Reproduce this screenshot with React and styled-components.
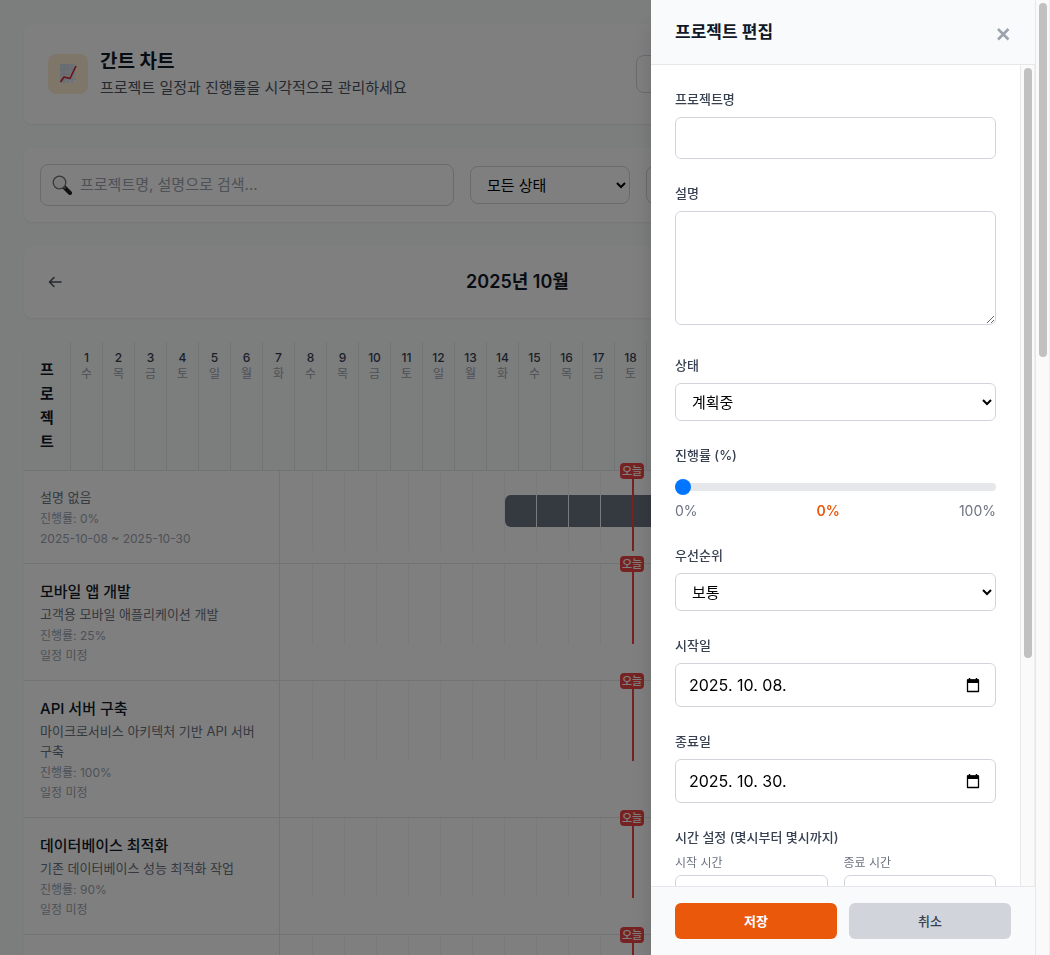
import React, { useState, useRef, useEffect } from 'react';
import styled, { createGlobalStyle, css } from 'styled-components';

const GlobalStyle = createGlobalStyle`
  *, *::before, *::after { box-sizing: border-box; }
  html, body, #root { height: 100%; }
  body {
    margin: 0;
    overflow: hidden;
    font-family: Inter, "Noto Sans CJK KR", sans-serif;
    font-size: 15px;
    line-height: 24px;
    color: #111827;
  }
  h1, h2, h3, p { margin: 0; }
  button, input, select, textarea { font: inherit; color: inherit; }
`;

const ScrollFrame = styled.div`
  display: flex;
  flex: 1;
  min-height: 0;
  height: ${(p) => p.$height || 'auto'};
`;

const Scroller = styled.div`
  flex: 1;
  min-width: 0;
  overflow-x: hidden;
  overflow-y: auto;
  scrollbar-width: none;
`;

const Track = styled.div`
  flex: none;
  width: 15px;
  padding: 3px;
  background: #fafafa;
  border-left: 1px solid #e8e8e8;
  border-right: 1px solid #ededed;
  overflow: hidden;
`;

const Thumb = styled.div`
  width: 8px;
  border-radius: 4px;
  background: #c1c1c1;
`;

const Shell = styled.div`
  position: relative;
  height: 100vh;
  overflow: hidden;
`;

const Page = styled.main`
  display: flex;
  flex-direction: column;
  gap: 24px;
  min-height: 2533px;
  padding: 24px;
  background: #f8fbfa;
`;

const Card = styled.section`
  display: flex;
  align-items: center;
  gap: ${(p) => p.$gap || 16}px;
  padding: ${(p) => p.$pad || 16}px;
  background: #fff;
  border-radius: 8px;
  box-shadow: 0 1px 2px rgba(0, 0, 0, 0.06);
`;

const IconTile = styled.div`
  display: grid;
  place-items: center;
  width: 40px;
  height: 40px;
  border-radius: 8px;
  background: #ffedd5;
`;

const HeaderText = styled.div`
  flex: 1;
`;

const PageTitle = styled.h1`
  font-size: 19px;
  line-height: 28px;
  font-weight: 700;
`;

const Subtitle = styled.p`
  color: #4b5563;
`;

const Outlined = css`
  height: 38px;
  background: #fff;
  border: 1px solid #d1d5db;
  border-radius: 6px;
`;

const Select = styled.select`
  ${Outlined}
  display: block;
  flex: none;
  width: ${(p) => p.$width || '100%'};
  padding: 0 0 0 12px;
  color: #000;
  border-radius: ${(p) => p.$radius || 6}px;
`;

const PlainButton = styled.button`
  ${Outlined}
  flex: none;
  width: ${(p) => p.$width}px;
  border-radius: 8px;
`;

const SearchBox = styled.label`
  display: flex;
  align-items: center;
  gap: 8px;
  flex: 1;
  min-width: 0;
  height: 42px;
  padding: 0 11px;
  border: 1px solid #d1d5db;
  border-radius: 8px;
`;

const SearchInput = styled.input`
  flex: 1;
  min-width: 0;
  padding: 0;
  border: 0;
  outline: 0;
  background: transparent;
  &::placeholder { color: #9ca3af; opacity: 1; }
`;

const MonthButton = styled.button`
  width: 30px;
  height: 40px;
  padding: 0;
  border: 0;
  background: none;
  color: #4b5563;
  display: grid;
  place-items: center;
`;

const MonthTitle = styled.h2`
  flex: 1;
  text-align: center;
  font-size: 18px;
  line-height: 28px;
  font-weight: 600;
`;

const Chart = styled.section`
  background: #fff;
  border-radius: 8px;
  box-shadow: 0 1px 2px rgba(0, 0, 0, 0.06);
  overflow: hidden;
`;

const ChartHead = styled.div`
  display: flex;
  background: #f9fafb;
  border-bottom: 1px solid #e5e7eb;
`;

const HeadLabel = styled.div`
  flex: none;
  width: 47px;
  padding: 16px 15px 16px 16px;
  border-right: 1px solid #e5e7eb;
  font-weight: 600;
  word-break: break-all;
`;

const Day = styled.div`
  flex: none;
  width: 32px;
  padding: 8px 0;
  border-right: 1px solid #e5e7eb;
  text-align: center;
  font-size: 12px;
  line-height: 16px;
  font-weight: 500;
  color: #374151;
`;

const Weekday = styled.div`
  font-weight: 400;
  color: #9ca3af;
`;

const Rows = styled.div`
  position: relative;
`;

const Row = styled.div`
  display: flex;
  border-bottom: 1px solid #e5e7eb;
`;

const Info = styled.div`
  flex: none;
  width: 256px;
  padding: 16px;
  border-right: 1px solid #e5e7eb;
`;

const ProjectName = styled.h3`
  font-size: 15px;
  line-height: 24px;
  font-weight: 500;
`;

const Description = styled.p`
  font-size: 13px;
  line-height: 20px;
  color: #6b7280;
`;

const Meta = styled.p`
  margin-top: 4px;
  font-size: 12px;
  line-height: 16px;
  color: #9ca3af;
`;

const Timeline = styled.div`
  position: relative;
  display: flex;
  height: 80px;
`;

const Cell = styled.div`
  flex: none;
  width: 32px;
  padding: 24px 0;
  border-left: ${(p) => (p.$first ? 0 : 1)}px solid #f3f4f6;
`;

const Segment = styled.div`
  height: 32px;
  background: #6b7280;
  border-radius: ${(p) => (p.$start ? '6px 0 0 6px' : '0')};
`;

const TodayLine = styled.div`
  position: absolute;
  top: 0;
  bottom: 0;
  left: 352px;
  width: 2px;
  background: #ef4444;
`;

const TodayTag = styled.span`
  position: absolute;
  top: -8px;
  left: -12px;
  width: 24px;
  border-radius: 4px;
  background: #ef4444;
  color: #fff;
  text-align: center;
  font-size: 11px;
  line-height: 16px;
  font-weight: 500;
`;

const Overlay = styled.div`
  position: absolute;
  inset: 0 15px 0 0;
  display: flex;
  justify-content: flex-end;
  overflow: hidden;
  background: rgba(0, 0, 0, 0.5);
`;

const Drawer = styled.aside`
  display: flex;
  flex-direction: column;
  width: 384px;
  max-width: 100%;
  height: 100%;
  background: #fff;
  box-shadow: 0 20px 25px -5px rgba(0, 0, 0, 0.2);
`;

const DrawerHead = styled.header`
  display: flex;
  align-items: center;
  justify-content: space-between;
  padding: 16px 24px;
  background: #f9fafb;
  border-bottom: 1px solid #e5e7eb;
`;

const DrawerTitle = styled.h2`
  font-size: 17px;
  line-height: 32px;
  font-weight: 600;
`;

const CloseButton = styled.button`
  display: grid;
  place-items: center;
  width: 16px;
  height: 32px;
  padding: 4px 0 0;
  border: 0;
  background: none;
  color: #9ca3af;
`;

const Fields = styled.form`
  display: flex;
  flex-direction: column;
  gap: 24px;
  min-height: 1131px;
  padding: 24px;
`;

const FieldBox = styled.div`
  display: flex;
  flex-direction: column;
  gap: 8px;
`;

const Label = styled.label`
  font-size: 13px;
  line-height: 20px;
  font-weight: 500;
  color: #374151;
`;

const TextInput = styled.input`
  width: 100%;
  min-width: 0;
  height: 42px;
  padding: 0 12px;
  border: 1px solid #d1d5db;
  border-radius: 6px;
  background: #fff;
`;

const TextArea = styled.textarea`
  display: block;
  width: 100%;
  height: 114px;
  margin-bottom: 6px;
  padding: 8px 12px;
  border: 1px solid #d1d5db;
  border-radius: 6px;
  resize: vertical;
`;

const Range = styled.input`
  appearance: none;
  width: 100%;
  height: 8px;
  margin: 10px 0 2px;
  border-radius: 4px;
  background: #e5e7eb;
  &::-webkit-slider-thumb {
    appearance: none;
    width: 16px;
    height: 16px;
    border-radius: 50%;
    background: #0075ff;
  }
`;

const RangeScale = styled.div`
  display: flex;
  justify-content: space-between;
  font-size: 14px;
  line-height: 20px;
  color: #6b7280;
`;

const RangeValue = styled.output`
  font-weight: 600;
  color: #ea580c;
`;

const DateBox = styled.div`
  display: flex;
  align-items: center;
  height: 44px;
  padding: 0 13px;
  border: 1px solid #d1d5db;
  border-radius: 6px;
`;

const DateInput = styled.input`
  flex: 1;
  min-width: 0;
  padding: 0;
  border: 0;
  outline: 0;
  font-size: 16px;
  color: #000;
`;

const CalendarButton = styled.button`
  display: grid;
  place-items: center;
  width: 18px;
  height: 24px;
  padding: 0;
  border: 0;
  background: none;
  color: #000;
`;

const Columns = styled.div`
  display: grid;
  grid-template-columns: 1fr 1fr;
  gap: 16px;
`;

const TimeField = styled.div`
  display: flex;
  flex-direction: column;
  gap: 4px;
`;

const SmallLabel = styled.label`
  font-size: 12px;
  line-height: 16px;
  color: #6b7280;
`;

const DrawerFoot = styled.footer`
  display: flex;
  gap: 12px;
  padding: 16px 24px;
  background: #f9fafb;
  border-top: 1px solid #e5e7eb;
`;

const ActionButton = styled.button`
  flex: 1;
  height: 36px;
  border: 0;
  border-radius: 6px;
  font-size: 13px;
  line-height: 20px;
  font-weight: ${(p) => (p.$primary ? 600 : 500)};
  color: ${(p) => (p.$primary ? '#fff' : '#374151')};
  background: ${(p) => (p.$primary ? '#ea580c' : '#d1d5db')};
`;

const ChartIcon = () => (
  <svg width="18" height="20" viewBox="0 0 18 20" aria-hidden="true">
    <defs>
      <linearGradient id="paper" x1="0" y1="0" x2="1" y2="1">
        <stop offset="0" stopColor="#cfd9e3" />
        <stop offset="1" stopColor="#eef2f5" />
      </linearGradient>
    </defs>
    <rect x="1" y="0" width="16" height="19" fill="url(#paper)" />
    <path d="M5 0v19M9 0v19M13 0v19M1 5h16M1 10h16M1 15h16" stroke="#c3ced8" strokeWidth="0.6" />
    <path d="M1.500 18 5 13l6 1.500 6-12.500" fill="none" stroke="#d8232f" strokeWidth="1.6" strokeLinejoin="round" />
  </svg>
);

const SearchIcon = () => (
  <svg width="20" height="20" viewBox="0 0 20 20" aria-hidden="true">
    <path d="m12 12 6 6" stroke="#222" strokeWidth="4" strokeLinecap="round" />
    <path d="m11 11 2.500 2.500" stroke="#777" strokeWidth="2" />
    <circle cx="7.500" cy="7.500" r="6.300" fill="#f4f5f6" stroke="#6d7275" strokeWidth="1.300" />
    <path d="M3.500 7a4 4 0 0 1 3.500-3.500" stroke="#fff" strokeWidth="1.200" fill="none" />
  </svg>
);

const ArrowIcon = ({ flip }) => (
  <svg width="14" height="12" viewBox="0 0 14 12" fill="none" stroke="currentColor" strokeWidth="1.600" strokeLinecap="round" strokeLinejoin="round" aria-hidden="true">
    <path d={flip ? 'M1 6h12M8 1.500 12.500 6 8 10.500' : 'M13 6H1.500M6 1.500 1.500 6 6 10.500'} />
  </svg>
);

const CloseIcon = () => (
  <svg width="14" height="14" viewBox="0 0 14 14" stroke="currentColor" strokeWidth="2.600" aria-hidden="true">
    <path d="m2 2 10.500 10.500M12.500 2 2 12.500" />
  </svg>
);

const CalendarIcon = () => (
  <svg width="14" height="15" viewBox="0 0 14 15" aria-hidden="true">
    <path d="M3.500 0v3M10.500 0v3" stroke="currentColor" strokeWidth="1.500" />
    <path d="M1.500 2h11v11.500h-11z" fill="none" stroke="currentColor" strokeWidth="1.300" strokeLinejoin="round" />
    <path d="M1 1.500h12v3.500H1z" fill="currentColor" />
  </svg>
);

const weekdays = ['수', '목', '금', '토', '일', '월', '화'];
const days = Array.from({ length: 31 }, (_, i) => i + 1);

const projects = [
  { name: '', description: '설명 없음', progress: 0, period: '2025-10-08 ~ 2025-10-30', start: 8, end: 30 },
  { name: '모바일 앱 개발', description: '고객용 모바일 애플리케이션 개발', progress: 25 },
  { name: 'API 서버 구축', description: '마이크로서비스 아키텍처 기반 API 서버 구축', progress: 100 },
  { name: '데이터베이스 최적화', description: '기존 데이터베이스 성능 최적화 작업', progress: 90 },
  { name: '', description: '설명 없음', progress: 0 },
];

function ScrollArea({ height, children }) {
  const area = useRef(null);
  const [thumb, setThumb] = useState({ height: 0, top: 0 });
  const measure = () => {
    const { clientHeight, scrollHeight, scrollTop } = area.current;
    const ratio = clientHeight / scrollHeight;
    setThumb({
      height: Math.round(clientHeight * ratio) - 6,
      top: Math.round(scrollTop * ratio),
    });
  };
  useEffect(() => {
    measure();
    const observer = new ResizeObserver(measure);
    observer.observe(area.current);
    return () => observer.disconnect();
  }, []);
  return (
    <ScrollFrame $height={height}>
      <Scroller ref={area} onScroll={measure}>{children}</Scroller>
      <Track aria-hidden="true">
        <Thumb style={{ height: thumb.height, marginTop: thumb.top }} />
      </Track>
    </ScrollFrame>
  );
}

function ProjectRow({ project }) {
  return (
    <Row>
      <Info>
        {project.name && <ProjectName>{project.name}</ProjectName>}
        <Description>{project.description}</Description>
        <Meta>진행률: {project.progress}%</Meta>
        <Meta>{project.period || '일정 미정'}</Meta>
      </Info>
      <Timeline>
        {days.map((d) => (
          <Cell key={d} $first={d === 1}>
            {d >= project.start && d <= project.end && <Segment $start={d === project.start} />}
          </Cell>
        ))}
        <TodayLine>
          <TodayTag>오늘</TodayTag>
        </TodayLine>
      </Timeline>
    </Row>
  );
}

function DateField({ id, label, initial }) {
  const [value, setValue] = useState(initial);
  return (
    <FieldBox>
      <Label htmlFor={id}>{label}</Label>
      <DateBox>
        <DateInput id={id} value={value} onChange={(e) => setValue(e.target.value)} />
        <CalendarButton type="button" aria-label={`${label} 선택`}>
          <CalendarIcon />
        </CalendarButton>
      </DateBox>
    </FieldBox>
  );
}

export default function App() {
  const [progress, setProgress] = useState(0);
  return (
    <Shell>
      <GlobalStyle />
      <ScrollArea height="100%">
        <Page>
          <Card $pad={24} $gap={12}>
            <IconTile><ChartIcon /></IconTile>
            <HeaderText>
              <PageTitle>간트 차트</PageTitle>
              <Subtitle>프로젝트 일정과 진행률을 시각적으로 관리하세요</Subtitle>
            </HeaderText>
            <PlainButton $width={200} aria-label="새로고침" />
            <PlainButton $width={139} aria-label="새 프로젝트" />
          </Card>
          <Card>
            <SearchBox>
              <SearchIcon />
              <SearchInput aria-label="프로젝트 검색" placeholder="프로젝트명, 설명으로 검색..." />
            </SearchBox>
            <Select $width="160px" $radius={8} aria-label="상태 필터">
              <option>모든 상태</option>
            </Select>
            <Select $width="160px" $radius={8} aria-label="우선순위 필터" />
            <PlainButton $width={173} aria-label="초기화" />
          </Card>
          <Card>
            <MonthButton aria-label="이전 달"><ArrowIcon /></MonthButton>
            <MonthTitle>2025년 10월</MonthTitle>
            <MonthButton aria-label="다음 달"><ArrowIcon flip /></MonthButton>
          </Card>
          <Chart>
            <ChartHead>
              <HeadLabel>프로젝트</HeadLabel>
              {days.map((d, i) => (
                <Day key={d}>
                  {d}
                  <Weekday>{weekdays[i % 7]}</Weekday>
                </Day>
              ))}
            </ChartHead>
            <Rows>
              {projects.map((p, i) => <ProjectRow key={i} project={p} />)}
            </Rows>
          </Chart>
        </Page>
      </ScrollArea>
      <Overlay>
        <Drawer role="dialog" aria-labelledby="drawer-title">
          <DrawerHead>
            <DrawerTitle id="drawer-title">프로젝트 편집</DrawerTitle>
            <CloseButton aria-label="닫기"><CloseIcon /></CloseButton>
          </DrawerHead>
          <ScrollArea>
            <Fields id="project-form">
              <FieldBox>
                <Label htmlFor="name">프로젝트명</Label>
                <TextInput id="name" />
              </FieldBox>
              <FieldBox>
                <Label htmlFor="description">설명</Label>
                <TextArea id="description" />
              </FieldBox>
              <FieldBox>
                <Label htmlFor="status">상태</Label>
                <Select id="status"><option>계획중</option></Select>
              </FieldBox>
              <FieldBox>
                <Label htmlFor="progress">진행률 (%)</Label>
                <Range
                  id="progress"
                  type="range"
                  min="0"
                  max="100"
                  value={progress}
                  onChange={(e) => setProgress(Number(e.target.value))}
                />
                <RangeScale>
                  <span>0%</span>
                  <RangeValue htmlFor="progress">{progress}%</RangeValue>
                  <span>100%</span>
                </RangeScale>
              </FieldBox>
              <FieldBox>
                <Label htmlFor="priority">우선순위</Label>
                <Select id="priority"><option>보통</option></Select>
              </FieldBox>
              <DateField id="start-date" label="시작일" initial="2025. 10. 08." />
              <DateField id="end-date" label="종료일" initial="2025. 10. 30." />
              <FieldBox role="group" aria-labelledby="time-label">
                <Label as="span" id="time-label">시간 설정 (몇시부터 몇시까지)</Label>
                <Columns>
                  <TimeField>
                    <SmallLabel htmlFor="start-time">시작 시간</SmallLabel>
                    <TextInput id="start-time" />
                  </TimeField>
                  <TimeField>
                    <SmallLabel htmlFor="end-time">종료 시간</SmallLabel>
                    <TextInput id="end-time" />
                  </TimeField>
                </Columns>
              </FieldBox>
            </Fields>
          </ScrollArea>
          <DrawerFoot>
            <ActionButton type="submit" form="project-form" $primary>저장</ActionButton>
            <ActionButton type="button">취소</ActionButton>
          </DrawerFoot>
        </Drawer>
      </Overlay>
    </Shell>
  );
}
